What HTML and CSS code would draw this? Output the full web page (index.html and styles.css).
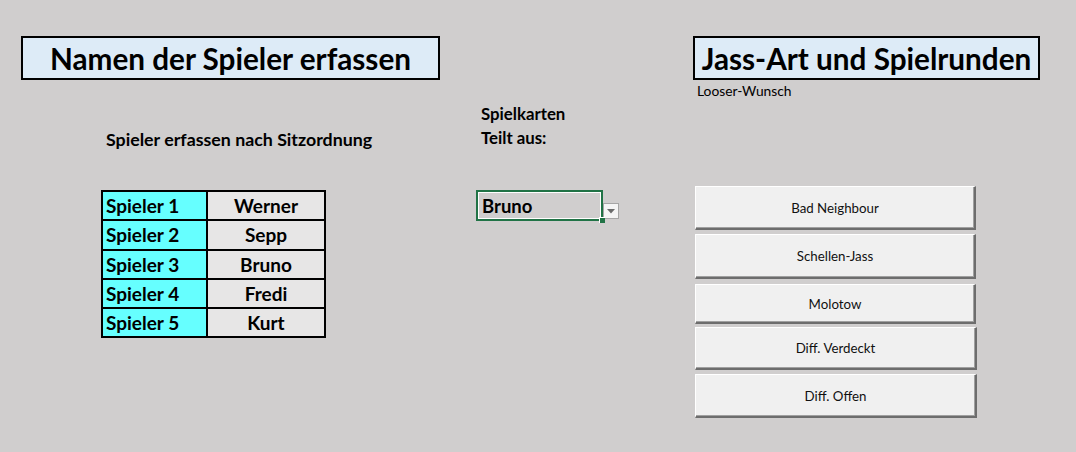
FILE: index.html
```html
<!DOCTYPE html>
<html lang="de">
<head>
<meta charset="utf-8">
<link rel="stylesheet" href="styles.css">
</head>
<body>
<div class="sheet">
  <section class="col-left">
    <div class="title-box title-left">Namen der Spieler erfassen</div>
    <div class="subtitle">Spieler erfassen nach Sitzordnung</div>
    <table class="players">
      <tr><td class="lbl">Spieler 1</td><td class="name">Werner</td></tr>
      <tr><td class="lbl">Spieler 2</td><td class="name">Sepp</td></tr>
      <tr><td class="lbl">Spieler 3</td><td class="name">Bruno</td></tr>
      <tr><td class="lbl">Spieler 4</td><td class="name">Fredi</td></tr>
      <tr><td class="lbl">Spieler 5</td><td class="name">Kurt</td></tr>
    </table>
  </section>
  <section class="col-mid">
    <div class="mid-label">Spielkarten</div>
    <div class="mid-label second">Teilt aus:</div>
    <div class="dealer">
      <div class="cell-sel"><span>Bruno</span><i class="handle"></i></div>
      <div class="dd-btn"><svg width="8" height="5" viewBox="0 0 8 5"><path d="M0 0H8L4 4.5Z" fill="#6b6b6b"/></svg></div>
    </div>
  </section>
  <section class="col-right">
    <div class="title-box title-right">Jass-Art und Spielrunden</div>
    <div class="note">Looser-Wunsch</div>
    <div class="buttons">
      <div class="btn b1">Bad Neighbour</div>
      <div class="btn b2">Schellen-Jass</div>
      <div class="btn b3">Molotow</div>
      <div class="btn b4">Diff. Verdeckt</div>
      <div class="btn b5">Diff. Offen</div>
    </div>
  </section>
</div>
</body>
</html>
```

FILE: styles.css
```css
html, body {
  margin: 0;
  padding: 0;
  background: #d0cece;
}
body {
  width: 1076px;
  height: 452px;
  overflow: hidden;
  font-family: Lato, "Open Sans", "Liberation Sans", sans-serif;
  color: #000;
}
.sheet {
  display: flex;
  align-items: flex-start;
  padding-top: 36px;
}
.title-box {
  box-sizing: border-box;
  height: 44px;
  border: 2px solid #000;
  background: #ddebf7;
  display: flex;
  align-items: center;
  justify-content: center;
  font-weight: 700;
  font-size: 29.7px;
  line-height: 1;
  padding-top: 1px;
}
.col-left {
  margin-left: 21px;
  width: 419px;
}
.subtitle {
  margin-top: 49px;
  margin-left: 85px;
  font-weight: 700;
  font-size: 17.8px;
  height: 20px;
  line-height: 20px;
}
.players {
  margin-top: 41px;
  margin-left: 80px;
  border-collapse: collapse;
  border: 2px solid #000;
}
.players td {
  border: 2px solid #000;
  height: 27.3px;
  padding: 0 3px;
  font-weight: 700;
  font-size: 19px;
  line-height: 1;
}
.players td.lbl {
  background: #66ffff;
  width: 97px;
}
.players td.name {
  background: #e7e6e6;
  width: 110px;
  text-align: center;
}
.col-mid {
  margin-left: 36px;
  width: 143px;
}
.mid-label {
  margin-top: 68px;
  margin-left: 5px;
  font-weight: 700;
  font-size: 16.8px;
  height: 20px;
  line-height: 20px;
}
.mid-label.second {
  margin-top: 4px;
}
.dealer {
  margin-top: 42px;
  display: flex;
  align-items: flex-start;
}
.cell-sel {
  position: relative;
  box-sizing: border-box;
  width: 127px;
  height: 31px;
  border: 2px solid #217346;
  box-shadow: inset 0 0 0 1px #ffffff;
  display: flex;
  align-items: center;
  padding-left: 4px;
  font-weight: 700;
  font-size: 18.5px;
}
.handle {
  position: absolute;
  right: -4px;
  bottom: -4px;
  width: 5px;
  height: 5px;
  background: #217346;
  border: 1px solid #fff;
  border-width: 1px 0 0 1px;
}
.dd-btn {
  box-sizing: border-box;
  margin-top: 13px;
  width: 16px;
  height: 16px;
  background: #f5f5f5;
  border: 1px solid #a6a6a6;
  display: flex;
  align-items: center;
  justify-content: center;
}
.col-right {
  margin-left: 74px;
  width: 347px;
}
.note {
  margin-left: 4px;
  margin-top: 3px;
  font-size: 13.8px;
  line-height: 16px;
  height: 16px;
}
.buttons {
  margin-top: 87px;
  margin-left: 2px;
  display: flex;
  flex-direction: column;
  align-items: flex-start;
}
.btn {
  box-sizing: border-box;
  width: 281px;
  background: #f0f0f0;
  border-top: 1px solid #ffffff;
  border-left: 1px solid #ffffff;
  border-right: 2px solid #6d6d6d;
  border-bottom: 2px solid #6d6d6d;
  box-shadow: inset -1px -1px 0 #a0a0a0;
  display: flex;
  align-items: center;
  justify-content: center;
  font-size: 13.3px;
  color: #111;
}
.b1 { height: 44px; }
.b2 { height: 45px; margin-top: 4px; }
.b3 { height: 40px; margin-top: 5px; }
.b4 { height: 43px; margin-top: 3px; width: 282px; }
.b5 { height: 44px; margin-top: 4px; width: 282px; }
```
